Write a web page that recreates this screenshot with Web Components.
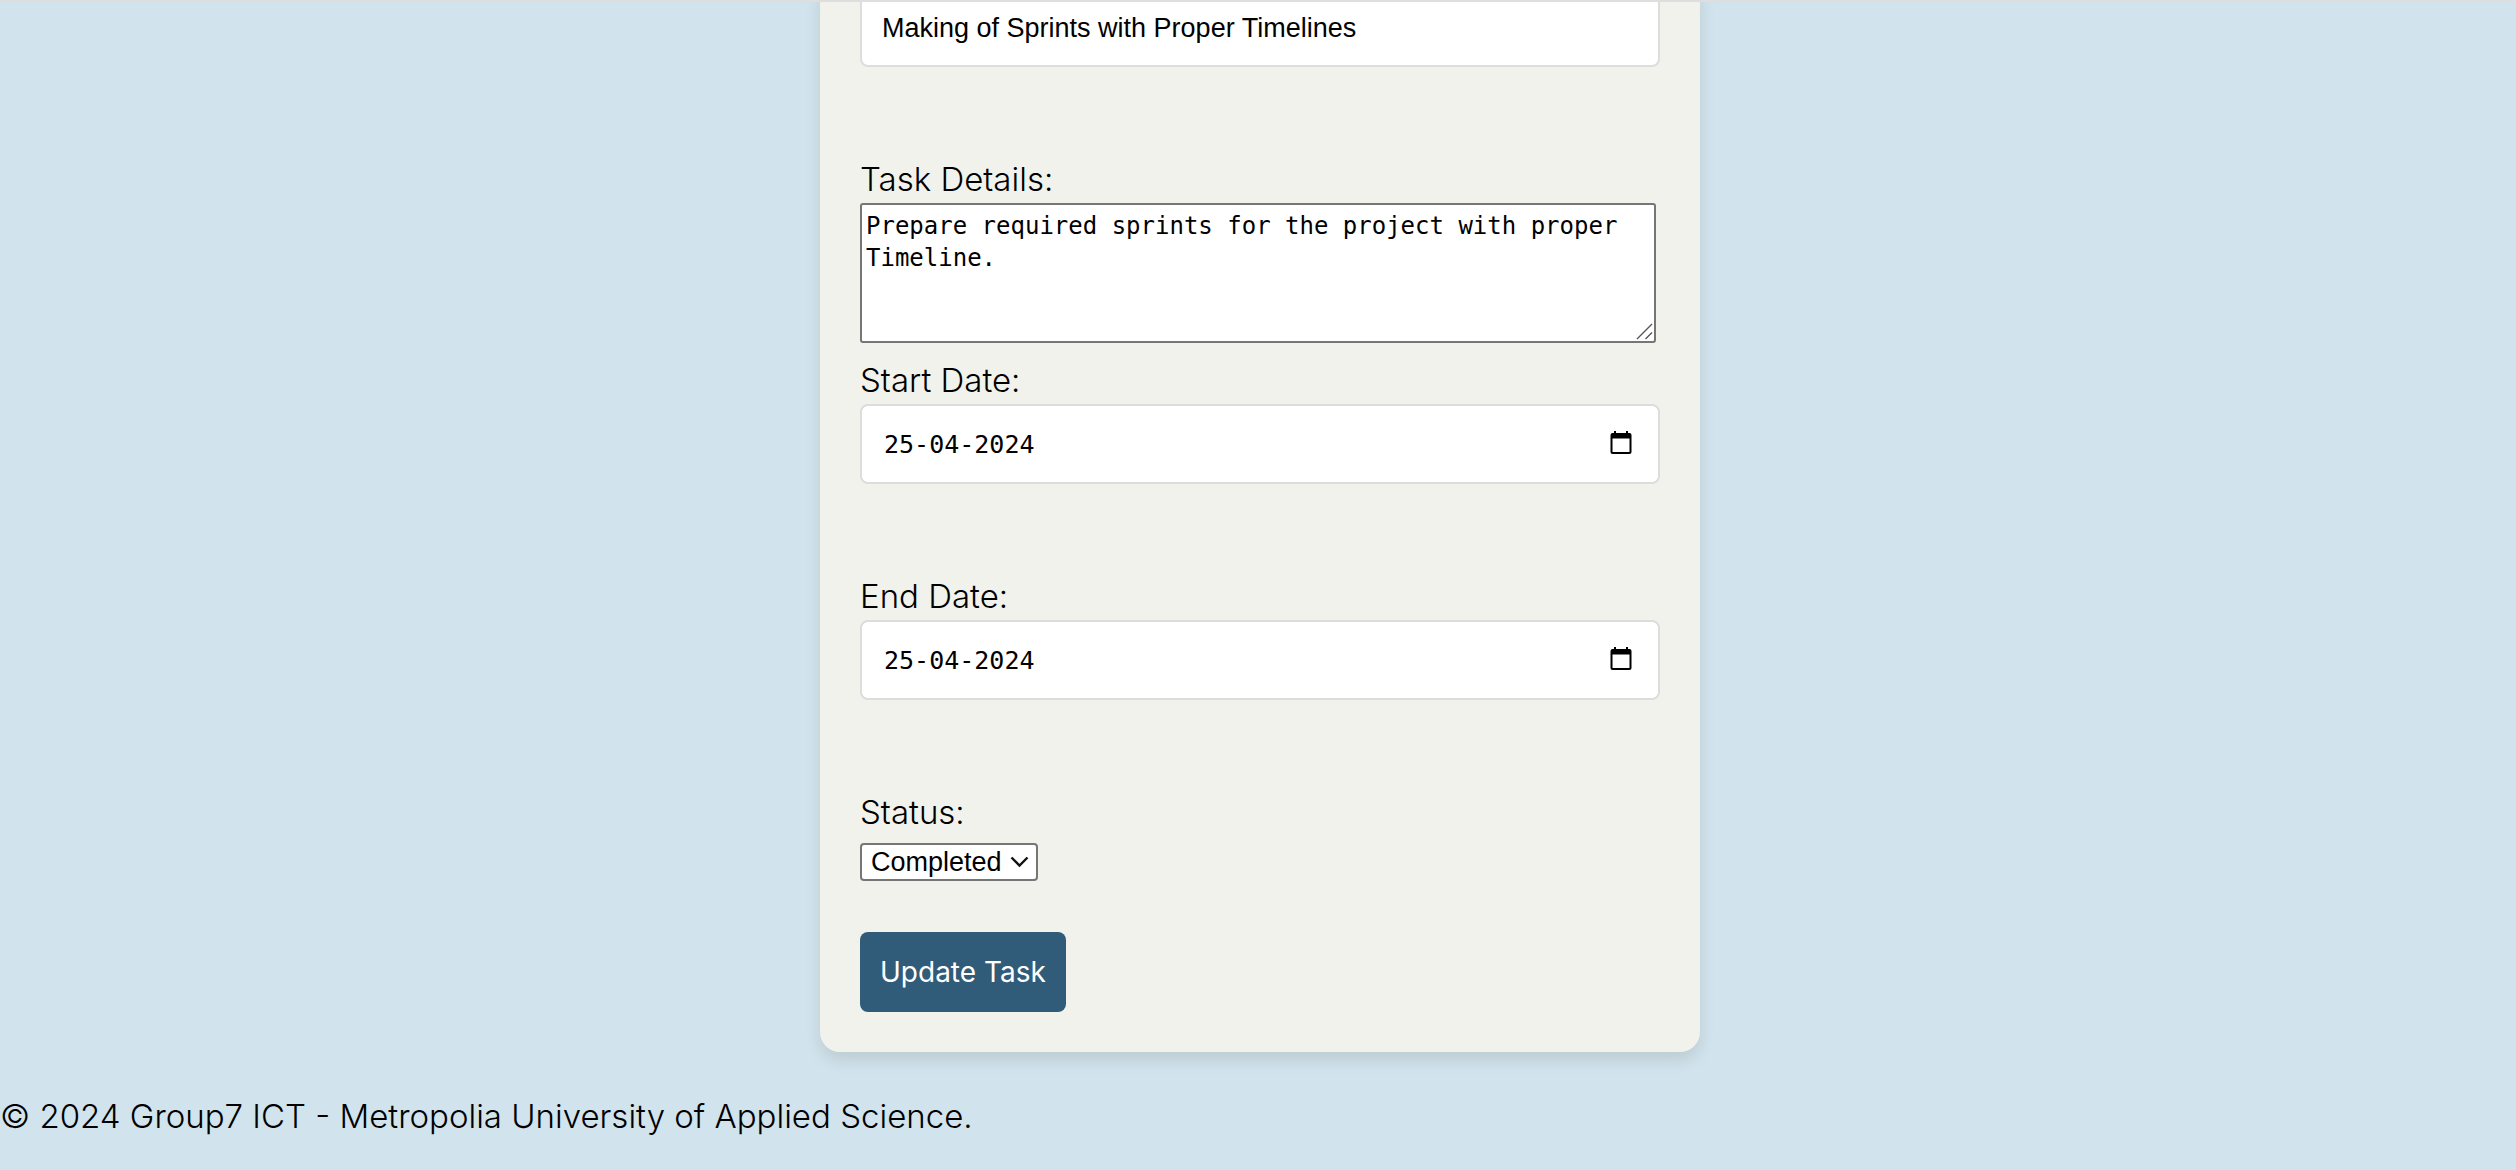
<!DOCTYPE html>
<html lang="en">
<head>
<meta charset="utf-8">
<title>Update Task</title>
<style>
  :root {
    --page: #d1e3ec;
    --card: #f1f2ec;
    --line: #dddddd;
    --control: #767676;
    --accent: #305c79;
    --sans: Inter, "Liberation Sans", sans-serif;
    --input: "Liberation Sans", Arial, sans-serif;
    --mono: "DejaVu Sans Mono", monospace;
  }
  body { margin: 0; background: var(--page); color: #000; font: 300 33px/48px var(--sans); }
</style>
</head>
<body>
<task-page>
  <task-card>
    <text-field value="Making of Sprints with Proper Timelines" name="Task Name"></text-field>
    <details-field label="Task Details:">Prepare required sprints for the project with proper Timeline.</details-field>
    <date-field label="Start Date:" value="25-04-2024"></date-field>
    <date-field label="End Date:" value="25-04-2024"></date-field>
    <status-field label="Status:"></status-field>
    <submit-button>Update Task</submit-button>
  </task-card>
  <page-footer slot="footer">© 2024 Group7 ICT - Metropolia University of Applied Science.</page-footer>
</task-page>

<script>
const base = `
  *, *::before, *::after { box-sizing: border-box; }
  :host { display: block; }
  label { display: block; }
`;
const define = (name, render) => customElements.define(name, class extends HTMLElement {
  constructor() {
    super();
    this.attachShadow({ mode: "open" });
  }
  connectedCallback() {
    this.shadowRoot.innerHTML = `<style>${base}</style>` + render(this);
  }
});
const boxed = `
  input {
    display: block; width: 100%; height: 80px; margin: 0; padding: 0 20px;
    border: 2px solid var(--line); border-radius: 8px; background: #fff; color: #000; outline: 0;
  }
`;

define("task-page", () => `
  <style>
    :host { border-top: 2px solid #dedede; }
    main { overflow: hidden; padding: 0 0 40px 4px; }
  </style>
  <main><slot></slot></main>
  <slot name="footer"></slot>`);

/* The card is scrolled so its first field runs under the top edge. */
define("task-card", () => `
  <style>
    :host {
      width: 880px; max-width: 100%; box-sizing: border-box; margin: -15px auto 0; padding: 0 40px 40px;
      background: var(--card); border-radius: 0 0 20px 20px; box-shadow: 0 8px 16px rgba(0, 0, 0, .1);
    }
    form { display: flex; flex-direction: column; align-items: stretch; }
  </style>
  <form><slot></slot></form>`);

define("text-field", el => `
  <style>${boxed}
    :host { margin-bottom: 88px; }
    input { padding-top: 3px; font: 27px var(--input); }
  </style>
  <input type="text" aria-label="${el.getAttribute("name")}" value="${el.getAttribute("value")}">`);

define("details-field", el => `
  <style>
    :host { margin-bottom: 13px; }
    .box { display: grid; margin-right: 4px; }
    textarea, svg { grid-area: 1 / 1; }
    textarea {
      width: 100%; height: 140px; margin: 0; padding: 5px 4px; resize: none; overflow: hidden;
      border: 2px solid var(--control); border-radius: 3px; background: #fff; color: #000; outline: 0;
      font: 24px/32px var(--mono);
    }
    svg { place-self: end; margin: 3px; pointer-events: none; }
  </style>
  <label for="f">${el.getAttribute("label")}</label>
  <div class="box">
    <textarea id="f">${el.textContent.trim()}</textarea>
    <svg width="17" height="17" viewBox="0 0 17 17" fill="none" stroke="#555" stroke-width="1.4"><path d="M1 16 16 1M9.500 16 16 9.500"/></svg>
  </div>`);

define("date-field", el => `
  <style>${boxed}
    :host { margin-bottom: 88px; }
    .box { display: grid; align-items: center; }
    input, button { grid-area: 1 / 1; }
    input { padding-left: 22px; font: 25px var(--mono); }
    button { justify-self: end; margin: 0 28px 0 0; padding: 0 0 2px; border: 0; background: none; color: #000; }
    svg { display: block; }
  </style>
  <label for="f">${el.getAttribute("label")}</label>
  <div class="box">
    <input id="f" type="text" inputmode="numeric" value="${el.getAttribute("value")}">
    <button type="button" aria-label="Open calendar">
      <svg width="22" height="24" viewBox="0 0 22 24"><path fill="currentColor" fill-rule="evenodd" d="M4 0h2v2h10V0h2v2h1.500A2 2 0 0 1 21.500 4v17a2 2 0 0 1-2 2h-17a2 2 0 0 1-2-2V4a2 2 0 0 1 2-2H4zM2.500 7.500V21h17V7.500z"/></svg>
    </button>
  </div>`);

define("status-field", el => `
  <style>
    :host { margin-bottom: 51px; }
    .box { display: grid; justify-content: start; align-items: center; margin-top: 7px; }
    select, svg { grid-area: 1 / 1; }
    select {
      appearance: none; height: 38px; margin: 0; padding: 0 34px 0 9px; border: 2px solid var(--control);
      border-radius: 4px; background: #fff; color: #000; font: 27px var(--input);
    }
    svg { justify-self: end; margin-right: 9px; pointer-events: none; }
  </style>
  <label for="f">${el.getAttribute("label")}</label>
  <div class="box">
    <select id="f"><option>Completed</option></select>
    <svg width="19" height="12" viewBox="0 0 19 12" fill="none" stroke="#111" stroke-width="2.400"><path d="m1.500 1.500 8 8 8-8"/></svg>
  </div>`);

define("submit-button", () => `
  <style>
    button {
      display: block; height: 80px; padding: 0 20px; border: 0; border-radius: 8px;
      background: var(--accent); color: #fff; font: 28px/40px var(--sans);
    }
  </style>
  <button type="submit"><slot></slot></button>`);

define("page-footer", () => `
  <style>:host { padding-bottom: 30px; }</style>
  <footer><slot></slot></footer>`);
</script>
</body>
</html>
